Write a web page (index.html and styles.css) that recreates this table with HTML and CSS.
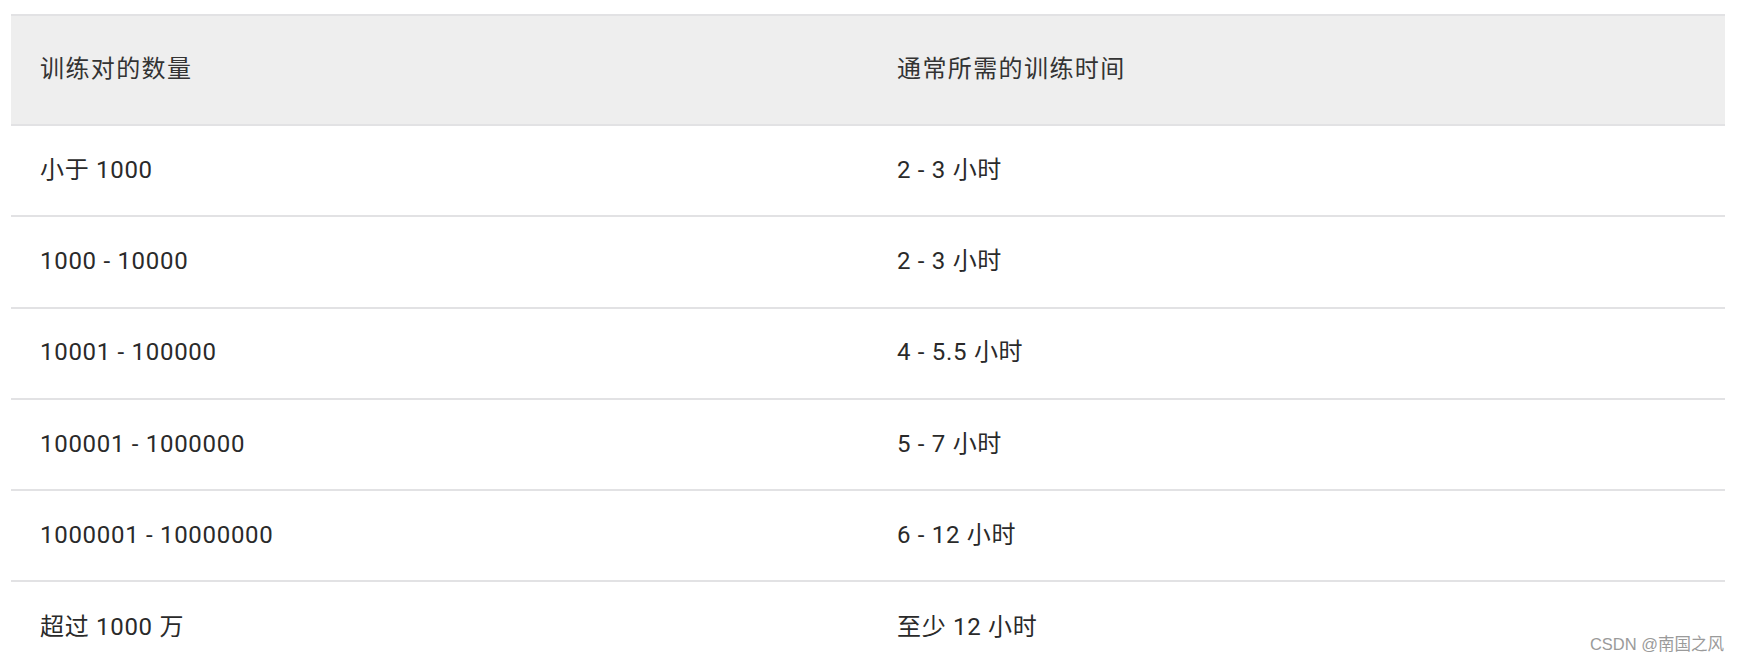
FILE: index.html
```html
<!DOCTYPE html>
<html lang="zh-CN">
<head>
<meta charset="utf-8">
<title>训练时间</title>
<link rel="stylesheet" href="styles.css">
</head>
<body>
<div class="page">
  <div class="table">
    <div class="row head">
      <div class="cell">训练对的数量</div>
      <div class="cell">通常所需的训练时间</div>
    </div>
    <div class="row">
      <div class="cell">小于 1000</div>
      <div class="cell">2 - 3 小时</div>
    </div>
    <div class="row">
      <div class="cell">1000 - 10000</div>
      <div class="cell">2 - 3 小时</div>
    </div>
    <div class="row">
      <div class="cell">10001 - 100000</div>
      <div class="cell">4 - 5.5 小时</div>
    </div>
    <div class="row">
      <div class="cell">100001 - 1000000</div>
      <div class="cell">5 - 7 小时</div>
    </div>
    <div class="row">
      <div class="cell">1000001 - 10000000</div>
      <div class="cell">6 - 12 小时</div>
    </div>
    <div class="row last">
      <div class="cell">超过 1000 万</div>
      <div class="cell">至少 12 小时</div>
    </div>
  </div>
  <div class="watermark">CSDN @南国之风</div>
</div>
</body>
</html>
```
FILE: styles.css
```css
html, body {
  margin: 0;
  padding: 0;
  background: #ffffff;
}
.page {
  position: relative;
  width: 1740px;
  height: 664px;
  overflow: hidden;
  padding: 14px 15px 0 11px;
  box-sizing: border-box;
  font-family: Roboto, "Noto Sans CJK SC", sans-serif;
  color: #2a2a2a;
}
.table {
  width: 1714px;
  display: flex;
  flex-direction: column;
}
.row {
  display: grid;
  grid-template-columns: 1fr 1fr;
  align-items: center;
  height: 91.3px;
  box-sizing: border-box;
  border-bottom: 2px solid #e2e2e4;
  font-size: 24px;
  letter-spacing: 0.7px;
}
.row.head {
  height: 112px;
  background: #eeeeee;
  border-top: 2px solid #e2e2e4;
  color: #333333;
  letter-spacing: 1.4px;
}
.row.last {
  border-bottom: none;
}
.cell {
  padding-left: 29px;
  padding-bottom: 2px;
  line-height: 30px;
  white-space: nowrap;
}
.watermark {
  position: absolute;
  right: 16px;
  top: 634px;
  font-family: "Liberation Sans", "Noto Sans CJK SC", sans-serif;
  font-size: 16.5px;
  color: #9a9a9a;
  line-height: 20px;
  letter-spacing: 0;
}
```
